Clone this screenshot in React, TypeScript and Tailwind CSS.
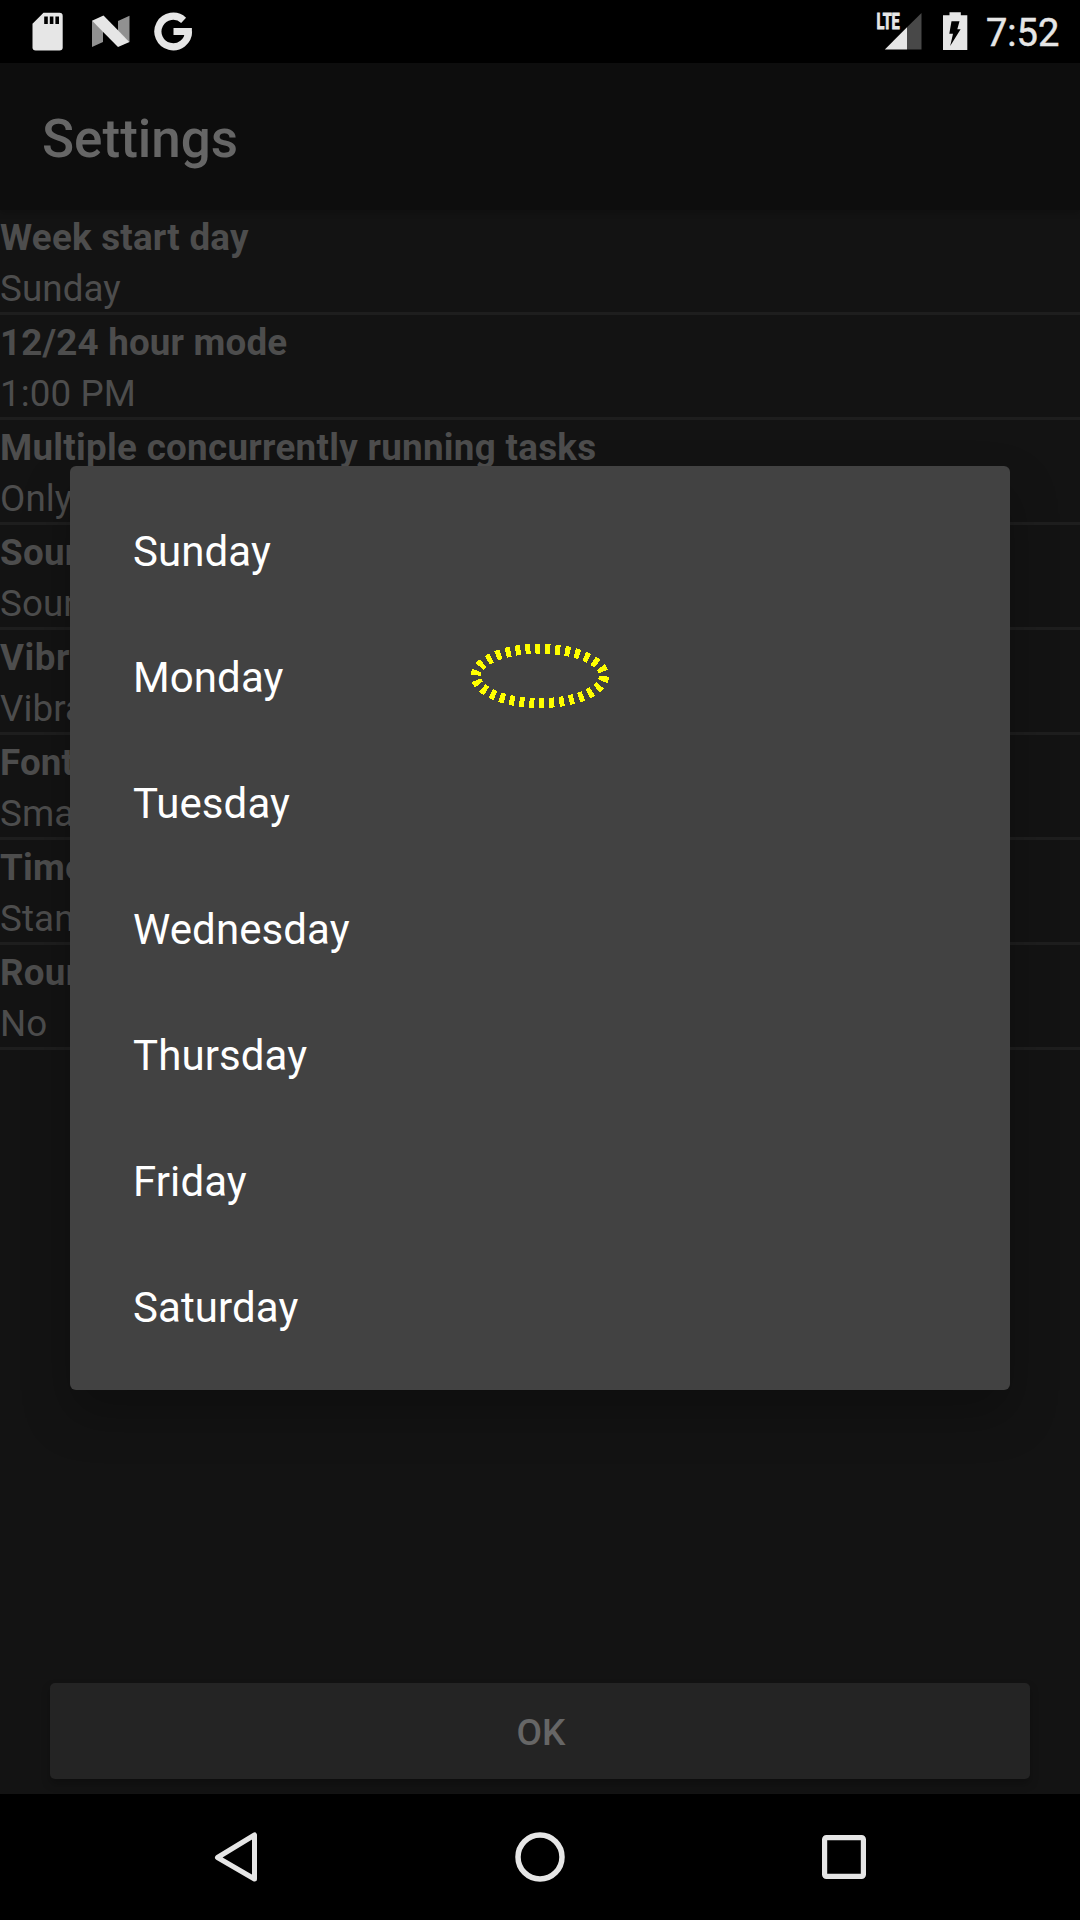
const rows = [
  ["Week start day", "Sunday", "tracking-[0.22px]"],
  ["12/24 hour mode", "1:00 PM", "tracking-[0.17px]"],
  ["Multiple concurrently running tasks", "Only one", "tracking-[0.29px]"],
  ["Sound", "Sound", "tracking-[0.26px]"],
  ["Vibrate", "Vibrate", "tracking-[0.5px]"],
  ["Font", "Small", "tracking-[0.1px]"],
  ["Time", "Stand", "tracking-[0.26px]"],
  ["Round", "No", "tracking-[0.26px]"],
];
const days = ["Sunday", "Monday", "Tuesday", "Wednesday", "Thursday", "Friday", "Saturday"];

function StatusBar() {
  return (
    <header className="flex h-[63px] shrink-0 items-start bg-black text-[#e6e6e6]">
      <svg className="ml-8 mt-3" width="31" height="39" viewBox="0 0 31 39">
        <path fill="currentColor" d="M11.5.7H27.5q3.2 0 3.2 3.2V35.3q0 3.2-3.2 3.2H3.7Q.5 38.500.5 35.300V11.700z" />
        <path stroke="#000" strokeWidth="3.6" d="M14 4.500v7.500M19.600 4.500v7.500M25.200 4.500v7.500" />
      </svg>
      <svg className="ml-[29px] mt-[15px]" width="38" height="33" viewBox="0 0 38 33">
        <path fill="#919191" d="M0 5.500L11 16V27L0 32zM26 6L37.500.8V27L26 16z" />
        <path fill="currentColor" d="M0 5.700L11.500.6L37.500 27L26 32z" />
      </svg>
      <svg className="ml-[24px] mt-3" width="39" height="40" viewBox="0 0 39 40">
        <path fill="none" stroke="currentColor" strokeWidth="7.200" d="M29.600 8.300A15.300 15.300 0 1 0 34.500 19.500M19.500 19.500H37.600" />
        <path fill="currentColor" d="M30.700 15.900H37.700Q38.200 20.500 37 24.500L30.500 23.100H34z" />
      </svg>
      <svg className="ml-auto mt-[10px]" width="47" height="41" viewBox="0 0 47 41">
        <path fill="#484848" d="M45.500 3V39.500H31V17.300z" />
        <path fill="currentColor" d="M31 17.300V39.500H8.800z" />
        <text x="0.400" y="19" fill="currentColor" stroke="currentColor" strokeWidth="0.900" fontSize="21.500" fontWeight="700" fontFamily="Roboto, sans-serif" textLength="23.400" lengthAdjust="spacingAndGlyphs">LTE</text>
      </svg>
      <svg className="ml-5 mt-3" width="25" height="39" viewBox="0 0 25 39">
        <path fill="currentColor" d="M6.500 3.200V.3H17.800V3.200H24.300V38H0V3.200z" />
        <path fill="#000" d="M8.500 9.300H16.500L14.300 17.300H17.600L7.200 34L10 21.700H6.300z" />
      </svg>
      <span className="ml-[18px] mr-[21px] mt-[5px] w-[73px] whitespace-nowrap text-[38px] font-normal leading-[57px] [-webkit-text-stroke:0.500px_#e6e6e6]">7:52</span>
    </header>
  );
}

export default function App() {
  return (
    <div className="relative flex h-[1920px] w-[1080px] flex-col overflow-hidden bg-[#131313] font-['Roboto',sans-serif]">
      <StatusBar />
      <div className="flex h-[147px] shrink-0 items-center bg-[#0d0d0d] pl-[42px] pt-[7px] text-[53px] font-medium text-[#666] shadow-[0_3px_6px_rgba(0,0,0,0.2)]">Settings</div>
      <main className="text-[36.75px] leading-[43px] text-[#4d4d4d]">
        {rows.map(([title, value, tracking]) => (
          <div key={title} className="h-[105px] border-b-[3px] border-[#1e1e1e] pt-[6px]">
            <div className={`font-bold ${tracking}`}>{title}</div>
            <div className="pt-[8px] tracking-[0.1px]">{value}</div>
          </div>
        ))}
      </main>
      <button className="mx-[50px] mb-[15px] mt-auto h-[96px] shrink-0 rounded-[5px] bg-[#242424] pl-[2px] pt-[3px] text-[37px] font-medium text-[#666] shadow-[0_5px_8px_rgba(0,0,0,0.25)]">OK</button>
      <nav className="flex h-[126px] shrink-0 items-center justify-between bg-black px-[209px] text-[#e6e6e6]">
        <svg width="54" height="54" viewBox="0 0 54 54" fill="none" stroke="currentColor" strokeWidth="5" strokeLinejoin="round"><path d="M8.500 27.500L45.500 5V49z" /></svg>
        <svg width="54" height="54" viewBox="0 0 54 54" fill="none" stroke="currentColor" strokeWidth="5.500"><circle cx="27" cy="27" r="22" /></svg>
        <svg width="54" height="54" viewBox="0 0 54 54" fill="none" stroke="currentColor" strokeWidth="5.200"><rect x="7.600" y="7.600" width="38.800" height="38.800" rx="1.800" /></svg>
      </nav>
      <div className="absolute left-[70px] top-[466px] h-[924px] w-[940px] rounded-[6px] bg-[#424242] pt-[22px] text-[42px] text-white shadow-[0_24px_48px_rgba(0,0,0,0.25)]">
        {days.map((d) => <div key={d} className="flex h-[126px] items-center pl-[63px] tracking-[0.1px]">{d}</div>)}
        <svg className="absolute left-[390px] top-[170px]" width="160" height="80" viewBox="0 0 160 80" shapeRendering="crispEdges">
          <ellipse cx="79.800" cy="39.900" rx="64.200" ry="27.200" fill="none" stroke="#ff0" strokeWidth="10" pathLength="300" strokeDasharray="5 5" strokeDashoffset="-0.5" />
        </svg>
      </div>
    </div>
  );
}
